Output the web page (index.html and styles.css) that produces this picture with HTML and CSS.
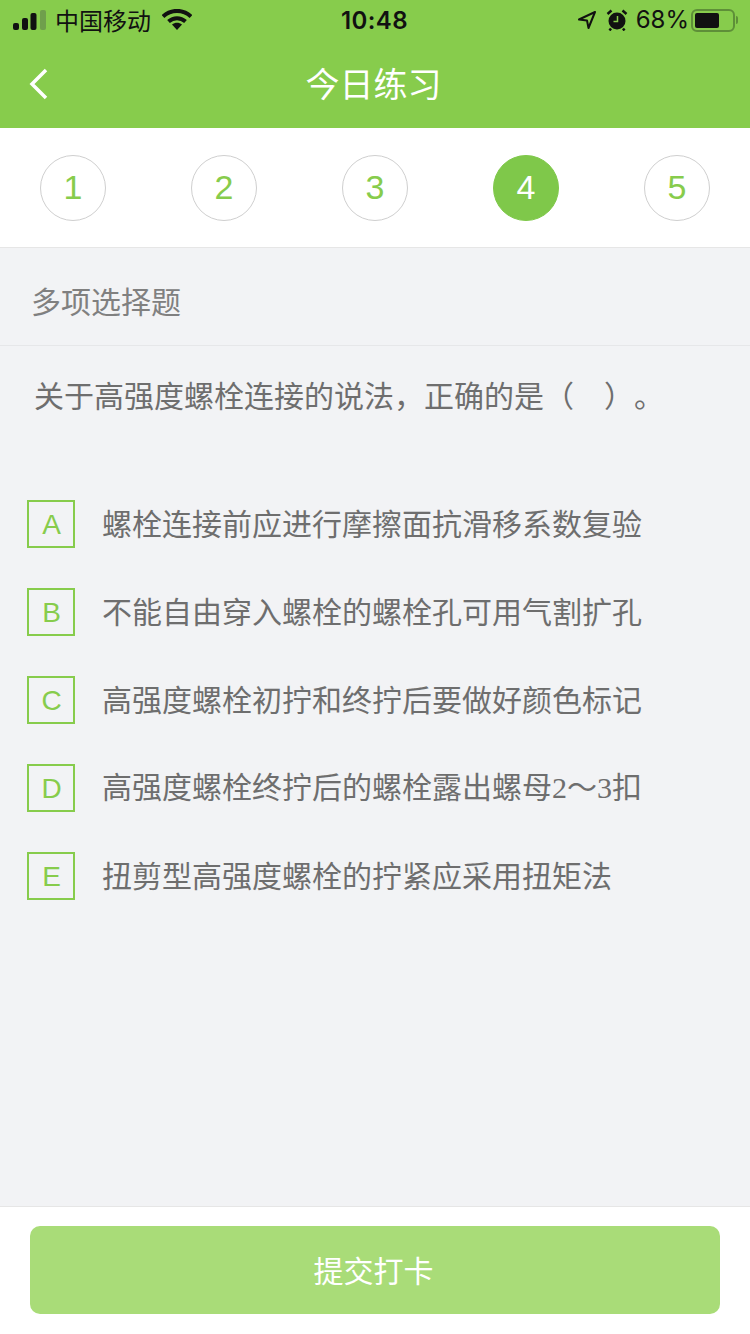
FILE: index.html
```html
<!DOCTYPE html>
<html lang="zh-CN">
<head>
  <meta charset="UTF-8">
  <meta name="viewport" content="width=device-width, initial-scale=1.0">
  <title>今日练习</title>
  <link rel="stylesheet" href="styles.css">
</head>
<body>
  <div class="header">
    <div class="status-bar">
      <div class="status-left">
        <svg class="signal" width="36" height="24" viewBox="0 0 36 24">
          <rect x="0" y="13" width="6" height="7" rx="2" fill="#111"/>
          <rect x="9" y="8" width="6" height="12" rx="2" fill="#111"/>
          <rect x="17.500" y="3" width="6" height="17" rx="2" fill="#111"/>
          <rect x="27" y="0" width="6" height="20" rx="2" fill="#6f9f4c"/>
        </svg>
        <span class="carrier">中国移动</span>
        <svg class="wifi" width="30" height="22" viewBox="0 0 30 22">
          <path d="M1 7.5C9 0 21 0 29 7.500" fill="none" stroke="#111" stroke-width="4"/>
          <path d="M6.500 12.500C11.500 8 18.500 8 23.500 12.500" fill="none" stroke="#111" stroke-width="4"/>
          <path d="M10 15.500C13 13 17 13 20 15.500L15 21Z" fill="#111"/>
        </svg>
      </div>
      <div class="clock">10:48</div>
      <div class="status-right">
        <svg class="location" width="20" height="20" viewBox="0 0 20 20">
          <path d="M18 2L2 9.500L10 10.500L11.500 18Z" fill="none" stroke="#111" stroke-width="2" stroke-linejoin="round"/>
        </svg>
        <svg class="alarm" width="22" height="22" viewBox="0 0 22 22">
          <circle cx="11" cy="12" r="8.500" fill="#111"/>
          <path d="M1.500 5L5.500 1.500M20.500 5L16.500 1.500M5 19.500L3.500 21.500M17 19.500L18.500 21.500" stroke="#111" stroke-width="2.500"/>
          <path d="M11.500 7V12.500H7.500" fill="none" stroke="#87cc4c" stroke-width="1.500"/>
        </svg>
        <span class="percent">68%</span>
        <div class="battery"><div class="battery-level"></div></div>
        <div class="battery-cap"></div>
      </div>
    </div>
    <div class="nav-bar">
      <svg class="back" width="22" height="34" viewBox="0 0 22 34">
        <path d="M18 3L4 17L18 31" fill="none" stroke="#fff" stroke-width="3.500"/>
      </svg>
      <div class="nav-title">今日练习</div>
    </div>
  </div>

  <div class="steps">
    <div class="step">1</div>
    <div class="step">2</div>
    <div class="step">3</div>
    <div class="step active">4</div>
    <div class="step">5</div>
  </div>

  <div class="content">
    <div class="type-row">多项选择题</div>
    <div class="question">关于高强度螺栓连接的说法，正确的是（　）。</div>
    <div class="options">
      <div class="option"><div class="letter">A</div><div class="option-text">螺栓连接前应进行摩擦面抗滑移系数复验</div></div>
      <div class="option"><div class="letter">B</div><div class="option-text">不能自由穿入螺栓的螺栓孔可用气割扩孔</div></div>
      <div class="option"><div class="letter">C</div><div class="option-text">高强度螺栓初拧和终拧后要做好颜色标记</div></div>
      <div class="option"><div class="letter">D</div><div class="option-text">高强度螺栓终拧后的螺栓露出螺母<span class="serif">2～3</span>扣</div></div>
      <div class="option"><div class="letter">E</div><div class="option-text">扭剪型高强度螺栓的拧紧应采用扭矩法</div></div>
    </div>
  </div>

  <div class="footer">
    <button class="submit">提交打卡</button>
  </div>
</body>
</html>
```

FILE: styles.css
```css
body {
  margin: 0;
  width: 750px;
  height: 1334px;
  display: flex;
  flex-direction: column;
  background-color: #f2f3f5;
  font-family: "Noto Sans CJK SC", "Noto Sans", sans-serif;
  overflow: hidden;
}
.header {
  height: 128px;
  background-color: #87cc4c;
}
.status-bar {
  height: 40px;
  position: relative;
  display: flex;
  justify-content: space-between;
  align-items: center;
  padding: 0 12px 0 13px;
  color: #111;
}
.status-left, .status-right {
  display: flex;
  align-items: center;
}
.signal {
  margin-top: 4px;
}
.carrier {
  font-size: 24px;
  margin-left: 6px;
  line-height: 40px;
}
.wifi {
  margin-left: 11px;
}
.clock {
  position: absolute;
  left: 341px;
  top: 0;
  font-family: "Inter", sans-serif;
  font-size: 24px;
  font-weight: 600;
  letter-spacing: 0.4px;
  line-height: 42px;
}
.location {
  margin-right: 9px;
}
.alarm {
  margin-right: 8px;
}
.percent {
  font-family: "Inter", sans-serif;
  font-size: 24px;
  line-height: 44px;
  margin-right: 2px;
}
.battery {
  width: 44px;
  height: 23px;
  box-sizing: border-box;
  border: 2px solid #5e8f38;
  border-radius: 6px;
  padding: 2px;
}
.battery-level {
  width: 66%;
  height: 100%;
  background-color: #111;
  border-radius: 2px;
}
.battery-cap {
  width: 2px;
  height: 8px;
  margin-left: 1px;
  background-color: #5e8f38;
  border-radius: 0 2px 2px 0;
}
.nav-bar {
  height: 88px;
  position: relative;
  display: flex;
  align-items: center;
  justify-content: center;
}
.back {
  position: absolute;
  left: 28px;
  top: 27px;
}
.nav-title {
  color: #fff;
  font-size: 34px;
  line-height: 86px;
  padding: 0 3px 2px 0;
}
.steps {
  height: 119px;
  background-color: #fff;
  border-bottom: 1px solid #e6e6e6;
  display: flex;
  justify-content: space-between;
  align-items: center;
  padding: 0 40px;
}
.step {
  width: 66px;
  height: 66px;
  box-sizing: border-box;
  border: 1px solid #cfcfcf;
  border-radius: 50%;
  color: #87cc4c;
  font-family: "Liberation Sans", sans-serif;
  font-size: 34px;
  display: flex;
  align-items: center;
  justify-content: center;
}
.step.active {
  background-color: #7fc84a;
  border-color: #7fc84a;
  color: #fff;
}
.content {
  flex: 1;
}
.type-row {
  height: 98px;
  box-sizing: border-box;
  border-bottom: 1px solid #e6e7e9;
  padding-left: 31px;
  font-size: 30px;
  line-height: 105px;
  color: #808080;
}
.question {
  padding: 23px 34px 0;
  font-size: 30px;
  line-height: 50px;
  color: #6e6e6e;
  text-spacing-trim: space-all;
}
.options {
  margin-top: 81px;
  padding-left: 27px;
  display: flex;
  flex-direction: column;
  gap: 40px;
}
.option {
  height: 48px;
  display: flex;
  align-items: center;
}
.letter {
  width: 48px;
  height: 48px;
  box-sizing: border-box;
  border: 2px solid #87cc4c;
  padding: 2px 0 0 1px;
  color: #87cc4c;
  font-family: "Liberation Sans", sans-serif;
  font-size: 28px;
  display: flex;
  align-items: center;
  justify-content: center;
}
.option-text {
  margin-left: 27px;
  padding-bottom: 4px;
  font-size: 30px;
  line-height: 44px;
  color: #6e6e6e;
}
.serif {
  font-family: "Liberation Serif", "Noto Sans CJK SC", serif;
}
.footer {
  height: 128px;
  box-sizing: border-box;
  background-color: #fff;
  border-top: 1px solid #e6e6e6;
  padding: 19px 30px 0;
}
.submit {
  display: block;
  width: 100%;
  height: 88px;
  border: none;
  border-radius: 10px;
  padding: 0 3px 3px 0;
  background-color: #a9dc78;
  color: #fff;
  font-family: "Noto Sans CJK SC", sans-serif;
  font-size: 30px;
}
```
